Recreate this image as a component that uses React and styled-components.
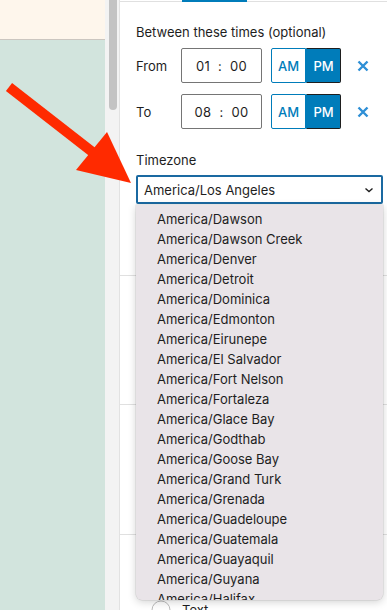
import React from 'react';
import styled, { createGlobalStyle } from 'styled-components';

const GlobalStyle = createGlobalStyle`
  html, body { margin: 0; padding: 0; }
  body {
    font-family: Inter, "Noto Sans", "Liberation Sans", sans-serif;
    color: #1e1e1e;
    -webkit-font-smoothing: antialiased;
  }
`;

const zones = [
  'America/Dawson', 'America/Dawson Creek', 'America/Denver', 'America/Detroit',
  'America/Dominica', 'America/Edmonton', 'America/Eirunepe', 'America/El Salvador',
  'America/Fort Nelson', 'America/Fortaleza', 'America/Glace Bay', 'America/Godthab',
  'America/Goose Bay', 'America/Grand Turk', 'America/Grenada', 'America/Guadeloupe',
  'America/Guatemala', 'America/Guayaquil', 'America/Guyana', 'America/Halifax',
];

const Page = styled.div`
  position: relative;
  display: flex;
  width: 387px;
  height: 610px;
  overflow: hidden;
`;

const Canvas = styled.div`
  width: 105px;
  display: flex;
  flex-direction: column;
`;

const TopBand = styled.div`
  height: 39px;
  background: #fef6ec;
  border-bottom: 1px solid #cbc6c0;
`;

const Mint = styled.div`
  flex: 1;
  background: #d2e4dd;
`;

const Gutter = styled.div`
  width: 14px;
  background: #f3f3f3;
  padding-left: 4px;
  box-sizing: border-box;
`;

const Thumb = styled.div`
  width: 8px;
  height: 110px;
  border-radius: 0 0 4px 4px;
  background: #c3c3c3;
`;

const Panel = styled.div`
  position: relative;
  flex: 1;
  background: #fff;
  border-left: 1px solid #e2e2e2;
  display: flex;
  flex-direction: column;
`;

const TabBar = styled.div`
  height: 1px;
  border-bottom: 1px solid #e0e0e0;
  padding-left: 62px;
`;

const TabLine = styled.div`
  width: 65px;
  height: 2px;
  background: #007cba;
`;

const Body = styled.div`
  padding: 22px 0 0 16px;
`;

const Label = styled.div`
  font-size: 13px;
  line-height: 16px;
  margin: ${p => p.$m || '0'};
`;

const Row = styled.div`
  display: flex;
  align-items: center;
  height: 35px;
  margin-top: ${p => p.$mt}px;
`;

const RowLabel = styled.div`
  width: 45px;
  font-size: 13px;
`;

const TimeBox = styled.div`
  width: 81px;
  height: 35px;
  box-sizing: border-box;
  border: 1px solid #757575;
  border-radius: 2px;
  display: flex;
  align-items: center;
  justify-content: center;
  gap: 8px;
  font-size: 13px;
  letter-spacing: 0.3px;
`;

const Toggle = styled.div`
  display: flex;
  margin-left: 9px;
  height: 35px;
`;

const ToggleBtn = styled.div`
  width: 35px;
  box-sizing: border-box;
  display: flex;
  align-items: center;
  justify-content: center;
  font-size: 13px;
  font-weight: 500;
  color: ${p => (p.$on ? '#fff' : '#007cba')};
  background: ${p => (p.$on ? '#007cba' : '#fff')};
  border: 1px solid ${p => (p.$on ? '#1e1e1e' : '#007cba')};
  border-left-color: #007cba;
  border-radius: ${p => (p.$on ? '0 2px 2px 0' : '2px 0 0 2px')};
`;

const Clear = styled.div`
  margin-left: 16px;
  display: flex;
  align-items: center;
`;

const Select = styled.div`
  width: 247px;
  height: 29px;
  box-sizing: border-box;
  border: 2px solid #1a69a1;
  border-radius: 2px;
  display: flex;
  align-items: center;
  justify-content: space-between;
  padding: 0 6px 0 6px;
  font-size: 13px;
`;

const Sections = styled.div`
  display: flex;
  flex-direction: column;
`;

const Section = styled.div`
  height: ${p => p.$h}px;
  border-bottom: 1px solid #e0e0e0;
`;

const BlockRow = styled.div`
  display: flex;
  align-items: center;
  gap: 10px;
  padding: 64px 0 0 30px;
  font-size: 13px;
`;

const Menu = styled.div`
  position: absolute;
  left: 16px;
  top: 205px;
  width: 247px;
  height: 395px;
  box-sizing: border-box;
  padding: 4px 0 0 21px;
  background: #e9e4e8;
  border-radius: 0 0 6px 6px;
  box-shadow: 0 2px 8px rgba(0, 0, 0, 0.18), 0 0 0 0.5px rgba(0, 0, 0, 0.12);
  overflow: hidden;
`;

const Item = styled.div`
  height: 20px;
  line-height: 20px;
  font-size: 13px;
  color: #1e1e1e;
  white-space: nowrap;
`;

const Arrow = styled.svg`
  position: absolute;
  left: 0;
  top: 0;
  pointer-events: none;
`;

const XIcon = () => (
  <svg width="12" height="12" viewBox="0 0 12 12">
    <path d="M1.5 1.5 L10.5 10.5 M10.5 1.5 L1.5 10.5" stroke="#2e8fd6" strokeWidth="2.4" strokeLinecap="butt" />
  </svg>
);

const Chevron = () => (
  <svg width="12" height="8" viewBox="0 0 12 8">
    <path d="M2.5 2.5 L6 5.5 L9.5 2.5" fill="none" stroke="#1e1e1e" strokeWidth="1.4" />
  </svg>
);

const TimeRow = ({ label, hh, mt }) => (
  <Row $mt={mt}>
    <RowLabel>{label}</RowLabel>
    <TimeBox>
      <span>{hh}</span>
      <span>:</span>
      <span>00</span>
    </TimeBox>
    <Toggle>
      <ToggleBtn>AM</ToggleBtn>
      <ToggleBtn $on>PM</ToggleBtn>
    </Toggle>
    <Clear><XIcon /></Clear>
  </Row>
);

export default function App() {
  return (
    <>
      <GlobalStyle />
      <Page>
        <Canvas>
          <TopBand />
          <Mint />
        </Canvas>
        <Gutter>
          <Thumb />
        </Gutter>
        <Panel>
          <TabBar>
            <TabLine />
          </TabBar>
          <Body>
            <Label>Between these times (optional)</Label>
            <TimeRow label="From" hh="01" mt={8} />
            <TimeRow label="To" hh="08" mt={11} />
            <Label $m="23px 0 7px">Timezone</Label>
            <Select>
              <span>America/Los Angeles</span>
              <Chevron />
            </Select>
          </Body>
          <Sections>
            <Section $h={71} />
            <Section $h={128} />
            <Section $h={129} />
            <Section $h={80}>
              <BlockRow>
                <svg width="22" height="22" viewBox="0 0 22 22">
                  <circle cx="11" cy="11" r="9" fill="none" stroke="#bbb" />
                </svg>
                <span>Text</span>
              </BlockRow>
            </Section>
          </Sections>
          <Menu>
            {zones.map(z => (
              <Item key={z}>{z}</Item>
            ))}
          </Menu>
        </Panel>
        <Arrow width="140" height="190" viewBox="0 0 140 190">
          <line x1="9" y1="87" x2="95" y2="154" stroke="#ff2a00" strokeWidth="10" />
          <polygon points="107,132 76,170 131,183" fill="#ff2a00" />
        </Arrow>
      </Page>
    </>
  );
}
